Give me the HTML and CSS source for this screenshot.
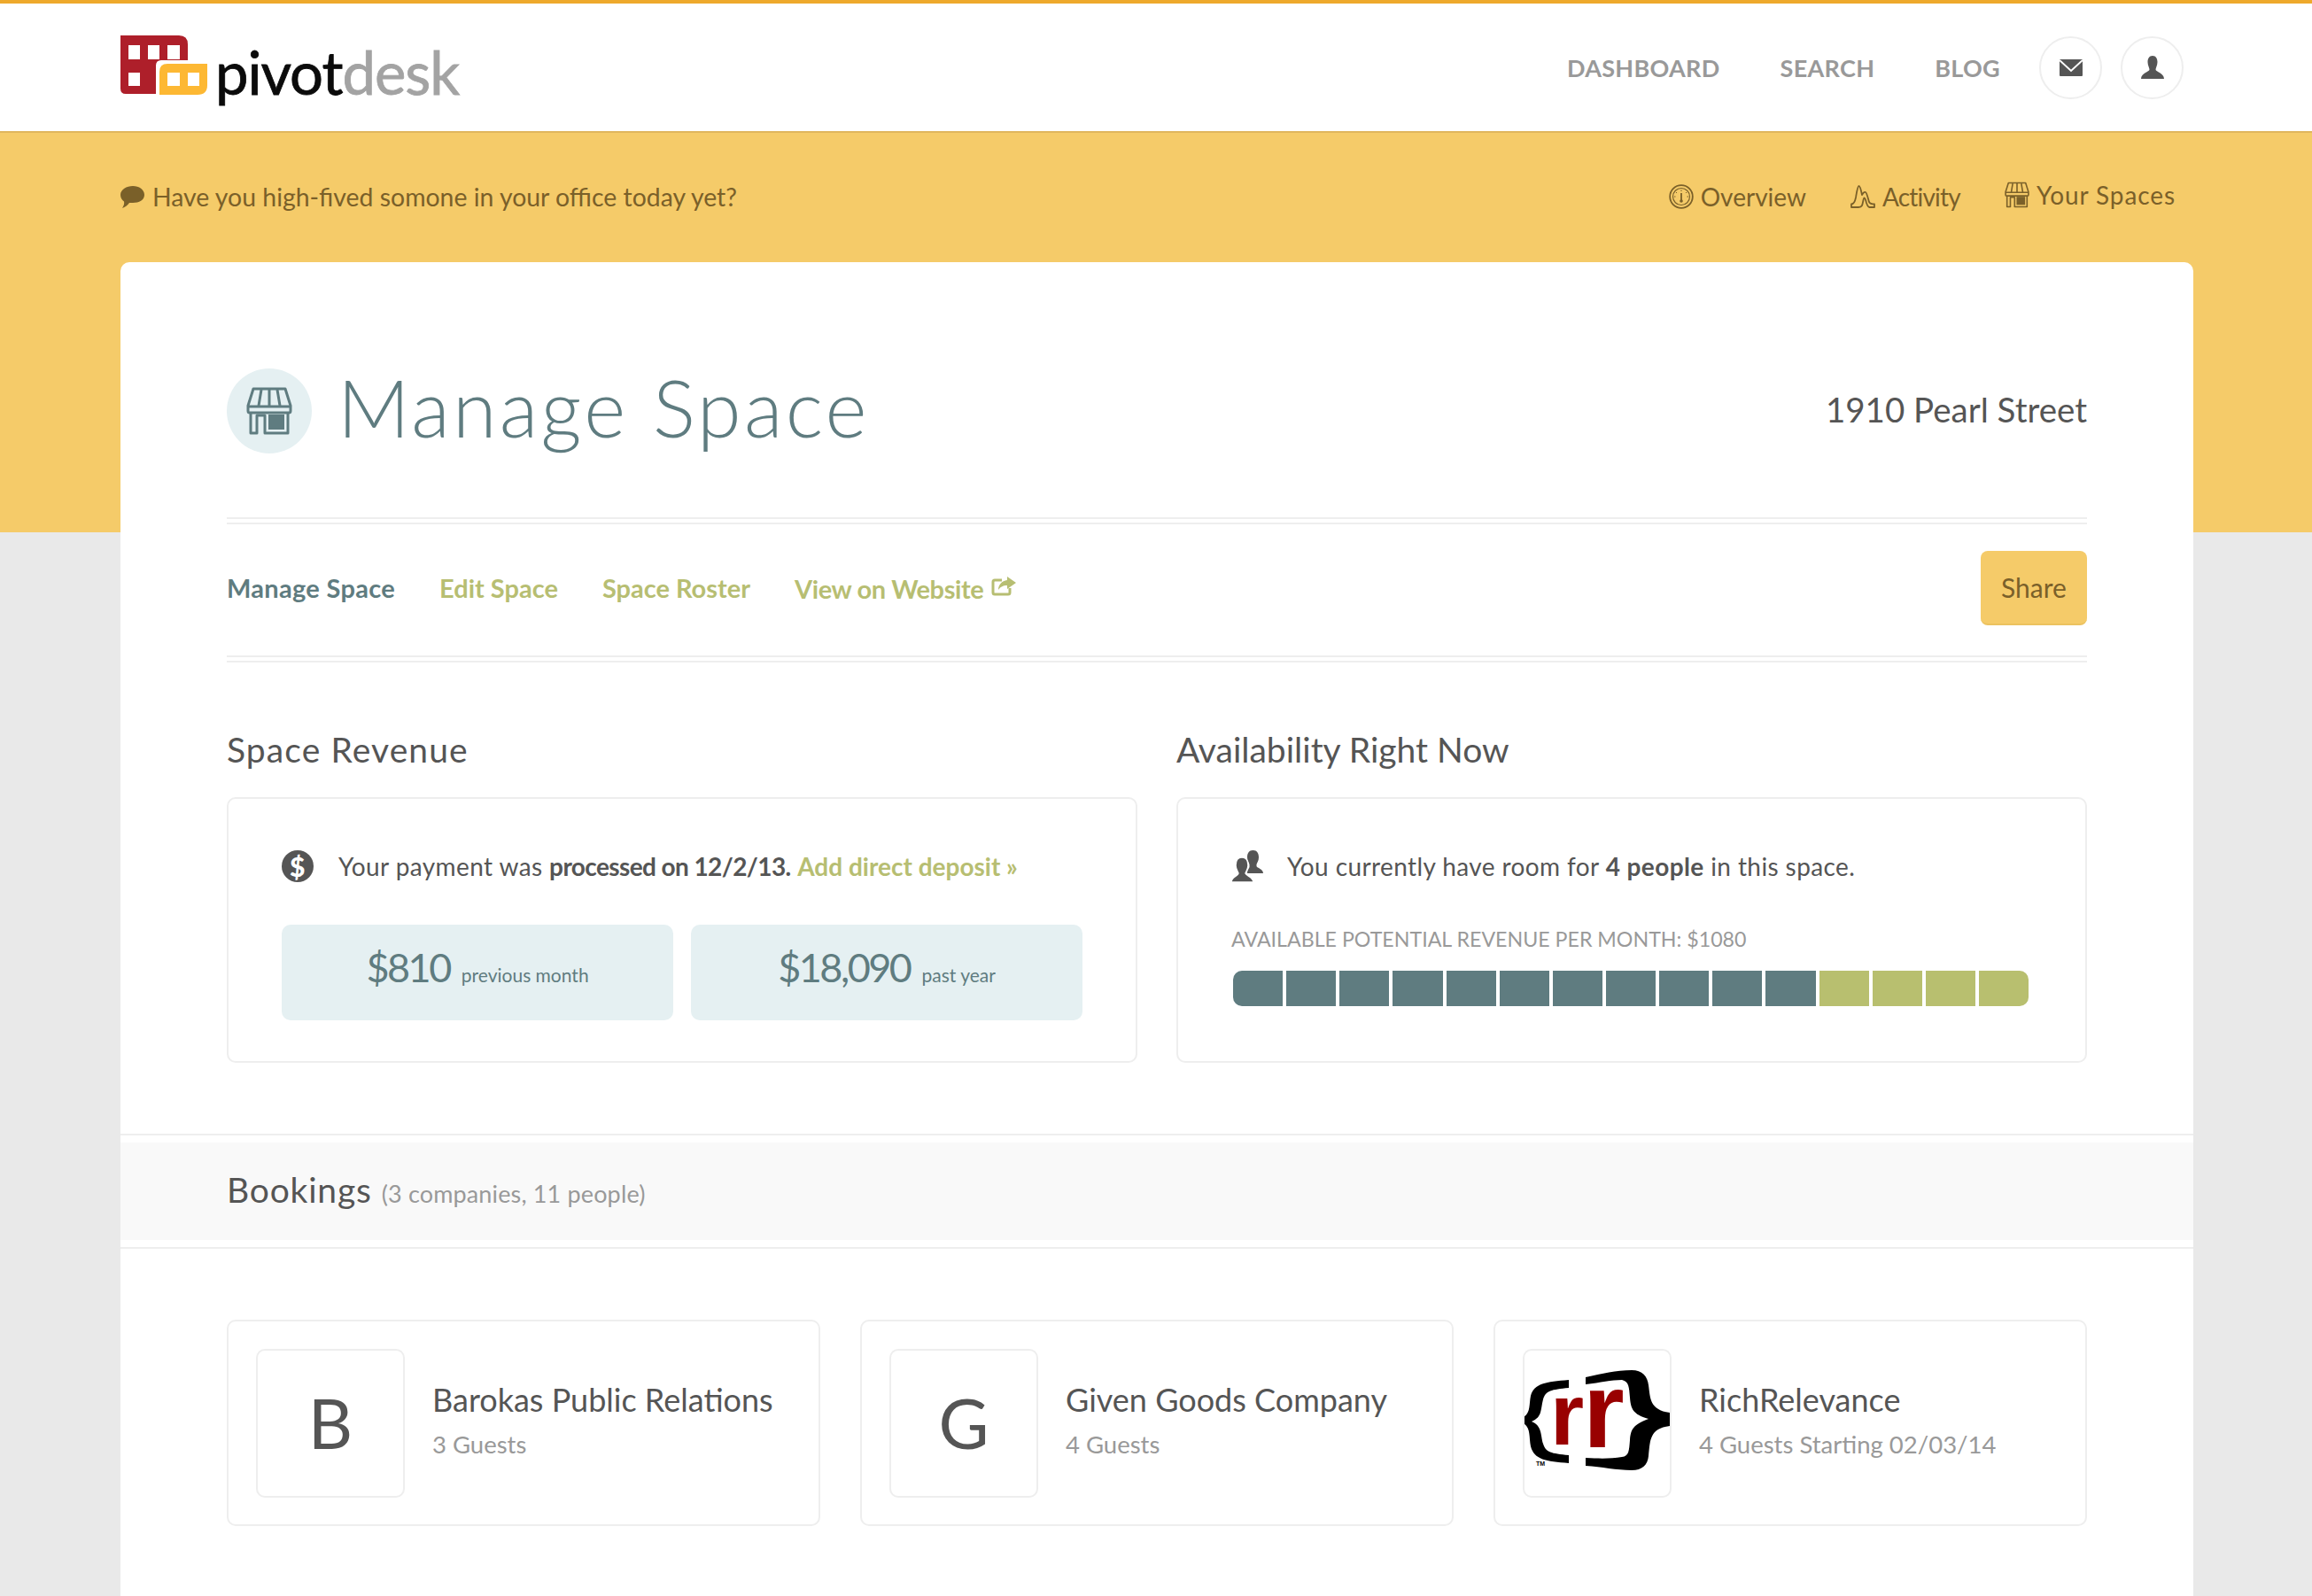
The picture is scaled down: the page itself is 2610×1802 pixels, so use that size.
FILE: index.html
```html
<!DOCTYPE html>
<html lang="en">
<head>
    <meta charset="UTF-8">
    <meta name="viewport" content="width=device-width, initial-scale=1.0">
    <title>PivotDesk - Manage Space</title>
    <link rel="stylesheet" href="styles.css">
</head>
<body>
    <svg class="defs" width="0" height="0">
        <symbol id="store" viewBox="0 0 52 54">
            <g fill="none" stroke="currentColor" stroke-width="3" stroke-linejoin="round">
                <path d="M8 2H44L50 21V27Q50 29 48 29H4Q2 29 2 27V21Z"/>
                <path d="M2 22H50M17 3L14 21M26 3V21M35 3L38 21"/>
                <path d="M5 29V52H12V32H21V52H47V29"/>
            </g>
            <rect x="25" y="31" width="18" height="17" fill="currentColor"/>
        </symbol>
        <symbol id="person" viewBox="0 0 26 26">
            <path d="M13 0C9 0 7.500 3.500 7.500 7C7.500 11 9.500 13.500 9.500 15.500C9.500 18 0 19.500 0 26H26C26 19.500 16.500 18 16.500 15.500C16.500 13.500 18.500 11 18.500 7C18.500 3.500 17 0 13 0Z" fill="currentColor"/>
        </symbol>
    </svg>

    <header class="topbar">
        <a class="logo" href="#">
            <svg class="logo-mark" viewBox="0 0 98 67" width="98" height="67">
                <path d="M0 0H66Q76 0 76 10V28H46Q40 28 40 34V66H6Q0 66 0 60Z" fill="#ae1f2a"/>
                <path d="M9 11h13v16H9zM31 11h13v16H31zM53 11h14v16H53zM9 42h13v15H9z" fill="#fff"/>
                <path d="M53 32H98V56Q98 67 87 67H44V41Q44 32 53 32Z" fill="#fdb833"/>
                <path d="M53 42h14v15H53zM76 42h13v15H76z" fill="#fff"/>
            </svg>
            <span class="wordmark">pivot<span class="wordmark-grey">desk</span></span>
        </a>
        <nav class="mainnav">
            <a href="#">Dashboard</a>
            <a href="#">Search</a>
            <a href="#">Blog</a>
            <a class="round-btn" href="#">
                <svg viewBox="0 0 26 19" width="26" height="19">
                    <rect width="26" height="19" rx="1" fill="#555"/>
                    <path d="M0 1L13 13L26 1" fill="none" stroke="#fff" stroke-width="2"/>
                </svg>
            </a>
            <a class="round-btn" href="#">
                <svg class="dark-icon" width="26" height="26"><use href="#person"/></svg>
            </a>
        </nav>
    </header>

    <div class="band">
        <div class="tipbar">
            <p class="tip">
                <svg viewBox="0 0 27 25" width="27" height="25">
                    <path d="M14 0C21 0 27 4 27 10C27 16 21 19 14 19C12 19 11 19 10 19C8 22 5 24 2 25C4 22 4.500 19.500 4 17.500C1.500 16 0 13 0 10C0 4 7 0 14 0Z" fill="currentColor"/>
                </svg>
                Have you high-fived somone in your office today yet?
            </p>
            <nav class="subnav">
                <a href="#">
                    <svg viewBox="0 0 28 28" width="28" height="28">
                        <g fill="none" stroke="currentColor">
                            <circle cx="14" cy="14" r="12.800" stroke-width="1.800"/>
                            <circle cx="14" cy="14" r="9.500" stroke-width="1.200"/>
                            <path d="M14 6.500v1.500M8 9l1 1M20 9l-1 1M6 14h1.500M22 14h-1.500" stroke-width="1"/>
                            <path d="M14 10V19" stroke-width="1.800"/>
                        </g>
                        <circle cx="14" cy="19" r="1.800" fill="currentColor"/>
                    </svg>
                    Overview
                </a>
                <a class="subnav-activity" href="#">
                    <svg viewBox="0 0 28 28" width="28" height="28">
                        <path d="M1 26V22.500C4 22.500 5 20 6 15C7 9 8 2 9.500 2C11 2 12 7 13 12C14 10 15.500 8.500 17 9C18.500 9.500 20 17 21 20C22 22 24 22.500 27 22.500V26H21.500C20 26 19 24 18 21C17.500 19 16.500 15.500 15.500 15.500C14.500 15.500 14 22 13 24C12 26 11 26 9 26Z" fill="none" stroke="currentColor" stroke-width="1.800" stroke-linejoin="round"/>
                    </svg>
                    Activity
                </a>
                <a class="subnav-spaces" href="#">
                    <svg width="28" height="30"><use href="#store"/></svg>
                    Your Spaces
                </a>
            </nav>
        </div>
    </div>

    <main class="card">
        <div class="title-row">
            <div class="title-left">
                <span class="title-icon"><svg width="52" height="54"><use href="#store"/></svg></span>
                <h1>Manage Space</h1>
            </div>
            <div class="address">1910 Pearl Street</div>
        </div>

        <div class="rule"></div>
        <div class="tabs">
            <nav class="tab-links">
                <a class="active" href="#">Manage Space</a>
                <a href="#">Edit Space</a>
                <a href="#">Space Roster</a>
                <a class="tab-external" href="#">View on Website
                    <svg viewBox="0 0 28 22" width="28" height="22">
                        <path d="M12 4H4Q2 4 2 6V18Q2 20 4 20H19Q21 20 21 18V13" fill="none" stroke="currentColor" stroke-width="3"/>
                        <path d="M18 0L28 7L18 14V10C13 10 10 12 8 15C8 9 12 5 18 4Z" fill="currentColor"/>
                    </svg>
                </a>
            </nav>
            <button class="share" type="button">Share</button>
        </div>
        <div class="rule"></div>

        <div class="columns">
            <section>
                <h2 class="revenue-title">Space Revenue</h2>
                <div class="panel">
                    <p class="message payment">
                        <span class="dollar">$</span>
                        <span>Your payment was <b>processed on 12/2/13.</b> <a href="#">Add direct deposit »</a></span>
                    </p>
                    <div class="stats">
                        <div class="stat"><strong>$810</strong> <small>previous month</small></div>
                        <div class="stat"><strong>$18,090</strong> <small>past year</small></div>
                    </div>
                </div>
            </section>
            <section>
                <h2>Availability Right Now</h2>
                <div class="panel">
                    <p class="message">
                        <svg class="dark-icon" viewBox="0 0 36 36" width="36" height="36">
                            <path d="M24.500 0C20 0 18 3.500 18 8C18 12 20 14 20.500 16V18C21 20 18 22 18 26H36C36 21 29 20 28.500 18V16C29 14 31 12 31 8C31 3.500 29 0 24.500 0Z" fill="currentColor"/>
                            <path d="M12 8C7 8 5 12 5 17C5 21 7 23 8 26C8 29 0 30 0 36H25C25 30 17 29 16 26C17 23 19 21 19 17C19 12 17 8 12 8Z" fill="currentColor" stroke="#fff" stroke-width="1.500"/>
                        </svg>
                        <span>You currently have room for <b>4 people</b> in this space.</span>
                    </p>
                    <div class="bar-label">AVAILABLE POTENTIAL REVENUE PER MONTH: $1080</div>
                    <div class="seats">
                        <i></i><i></i><i></i><i></i><i></i><i></i><i></i><i></i><i></i><i></i><i></i>
                        <i class="free"></i><i class="free"></i><i class="free"></i><i class="free"></i>
                    </div>
                </div>
            </section>
        </div>

        <div class="bookings-head">
            <div class="bookings-bar">
                <h2>Bookings</h2>
                <span>(3 companies, 11 people)</span>
            </div>
        </div>

        <div class="bookings">
            <div class="company">
                <div class="company-logo">B</div>
                <div class="company-text">
                    <div class="company-name">Barokas Public Relations</div>
                    <div class="company-sub">3 Guests</div>
                </div>
            </div>
            <div class="company">
                <div class="company-logo">G</div>
                <div class="company-text">
                    <div class="company-name">Given Goods Company</div>
                    <div class="company-sub">4 Guests</div>
                </div>
            </div>
            <div class="company">
                <div class="company-logo">
                    <svg viewBox="0 0 168 168" width="168" height="168">
                        <path d="M52 36V45C32 47 26 48 23 58C20 70 22 78 10 83C22 88 20 98 23 108C26 118 32 119 52 121V130C26 128 13 126 9 111C7 100 9 90 1 85V78C9 73 7 64 9 54C13 40 26 38 52 36Z" fill="#000"/>
                        <path d="M71 33C90 29 105 25 123 25C135 25 141 32 142 42C144 56 143 70 166 73V88C143 91 144 104 142 122C141 132 135 138 123 138C105 138 90 134 71 133V124C88 125 100 125 112 123C120 122 120 116 121 104C122 92 124 87 142 80C124 75 122 68 121 56C120 44 120 38 112 36C100 36 88 39 71 41Z" fill="#000"/>
                        <text class="rr" x="31" y="109" font-size="98">r</text>
                        <text class="rr" x="68" y="112" font-size="120">r</text>
                        <text class="tm" x="15" y="133" font-size="7">TM</text>
                    </svg>
                </div>
                <div class="company-text">
                    <div class="company-name">RichRelevance</div>
                    <div class="company-sub">4 Guests Starting 02/03/14</div>
                </div>
            </div>
        </div>
    </main>
</body>
</html>
```

FILE: styles.css
```css
* {
    box-sizing: border-box;
}
html, body {
    margin: 0;
    padding: 0;
}
body {
    display: flex;
    flex-direction: column;
    min-height: 100vh;
    background: #e9e9e9;
    color: #555;
    font-family: Lato, "Open Sans", sans-serif;
    font-size: 28px;
}
a {
    color: inherit;
    text-decoration: none;
}
h1, h2, p {
    margin: 0;
    font-weight: normal;
}
.defs {
    display: block;
    height: 0;
}

/* top bar */
.topbar {
    display: flex;
    flex-shrink: 0;
    align-items: center;
    justify-content: space-between;
    height: 150px;
    padding: 0 145px 0 136px;
    background: #fff;
    border-top: 4px solid #eea92c;
    border-bottom: 2px solid #e0b65e;
}
.logo {
    display: flex;
    align-items: flex-start;
    height: 80px;
    margin-top: 8px;
}
.wordmark {
    margin: 1px 0 0 9px;
    color: #0b0b0b;
    font-size: 67px;
    line-height: 80px;
    letter-spacing: -1.050px;
    -webkit-text-stroke: 0.800px currentColor;
}
.wordmark-grey {
    color: #a3a3a3;
}
.mainnav {
    display: flex;
    align-items: center;
    color: #999;
    font-size: 27px;
    font-weight: 700;
    letter-spacing: 0.300px;
    text-transform: uppercase;
}
.mainnav a {
    margin-right: 68px;
}
.mainnav a.round-btn {
    display: flex;
    align-items: center;
    justify-content: center;
    width: 71px;
    height: 71px;
    margin: 0 0 0 21px;
    border: 2px solid #eee;
    border-radius: 50%;
}
.mainnav a:nth-child(3) {
    margin-right: 23px;
}
.dark-icon {
    color: #555;
}

/* yellow band */
.band {
    flex-shrink: 0;
    height: 451px;
    background: #f5cb69;
    color: #7a6029;
}
.tipbar {
    display: flex;
    align-items: center;
    justify-content: space-between;
    height: 144px;
    padding: 0 154px 0 136px;
}
.tip {
    display: flex;
    align-items: center;
    gap: 9px;
    font-size: 28.400px;
}
.subnav {
    display: flex;
    align-items: center;
    gap: 50px;
}
.subnav a {
    display: flex;
    align-items: center;
    gap: 8px;
}
.subnav .subnav-activity {
    letter-spacing: -0.800px;
}
.subnav .subnav-spaces {
    margin-top: -4px;
    letter-spacing: 0.900px;
}

/* main card */
.card {
    flex: 1;
    width: 2340px;
    margin: -305px 0 0 136px;
    padding-top: 120px;
    background: #fff;
    border-radius: 10px 10px 0 0;
}
.title-row {
    display: flex;
    align-items: center;
    justify-content: space-between;
    margin: 0 120px 72px;
}
.title-left {
    display: flex;
    align-items: center;
    gap: 29px;
}
.title-icon {
    display: flex;
    align-items: center;
    justify-content: center;
    width: 96px;
    height: 96px;
    background: #e5f0f2;
    border-radius: 50%;
    color: #5f7c80;
}
h1 {
    margin-top: -10px;
    color: #5f7c80;
    font-size: 90px;
    font-weight: 300;
    line-height: 96px;
    letter-spacing: 3.200px;
}
.address {
    margin-top: -5px;
    font-size: 38.500px;
}
.rule {
    height: 8px;
    margin: 0 120px;
    border-top: 2px solid #eee;
    border-bottom: 2px solid #eee;
}
.tabs {
    display: flex;
    align-items: flex-start;
    justify-content: space-between;
    height: 148px;
    margin: 0 120px;
    padding-top: 30px;
}
.tab-links {
    display: flex;
    align-items: center;
    gap: 50px;
    height: 82px;
    color: #b7be72;
    font-size: 29px;
    font-weight: 700;
}
.tab-links .active {
    color: #5f7c80;
    letter-spacing: 0.300px;
}
.tab-external {
    display: flex;
    align-items: center;
    gap: 9px;
    margin-top: 3px;
    letter-spacing: -0.400px;
}
.tab-external svg {
    margin-top: -6px;
}
.share {
    width: 120px;
    height: 84px;
    padding: 0;
    background: #f5cb69;
    border: none;
    border-bottom: 2px solid #ecc25f;
    border-radius: 8px;
    color: #7a6029;
    font: inherit;
    font-size: 30px;
}

/* revenue and availability */
.columns {
    display: grid;
    grid-template-columns: 1028px 1028px;
    gap: 44px;
    margin: 74px 120px 80px;
}
h2 {
    font-size: 39px;
    line-height: 48px;
}
.revenue-title {
    letter-spacing: 1.100px;
}
.panel {
    height: 300px;
    margin-top: 30px;
    padding: 58px 60px 0;
    border: 2px solid #eee;
    border-radius: 10px;
}
.message {
    display: flex;
    align-items: center;
    gap: 27px;
    height: 36px;
    letter-spacing: 0.400px;
}
.message b {
    font-weight: 700;
}
.payment {
    gap: 28px;
}
.payment b {
    letter-spacing: -0.600px;
}
.message a {
    color: #b7be72;
    font-weight: 700;
    letter-spacing: 0;
}
.dollar {
    display: flex;
    align-items: center;
    justify-content: center;
    width: 36px;
    height: 36px;
    background: #555;
    border-radius: 50%;
    color: #fff;
    font-size: 30px;
    font-weight: 900;
}
.stats {
    display: grid;
    grid-template-columns: 1fr 1fr;
    gap: 20px;
    margin-top: 48px;
}
.stat {
    display: flex;
    align-items: baseline;
    justify-content: center;
    gap: 13px;
    height: 108px;
    padding-top: 21px;
    background: #e5f0f2;
    border-radius: 10px;
    color: #5f7c80;
}
.stat strong {
    font-size: 45px;
    font-weight: 400;
    letter-spacing: -2.500px;
}
.stat small {
    font-size: 21px;
}
.bar-label {
    margin-top: 50px;
    color: #999;
    font-size: 23.200px;
    line-height: 28px;
}
.seats {
    display: flex;
    gap: 4px;
    width: 898px;
    height: 40px;
    margin: 22px 0 0 2px;
}
.seats i {
    flex: 1;
    background: #5f7c80;
}
.seats i:first-child {
    border-radius: 10px 0 0 10px;
}
.seats i.free {
    background: #b8bf6f;
}
.seats i:last-child {
    border-radius: 0 10px 10px 0;
}

/* bookings */
.bookings-head {
    padding: 8px 0;
    border-top: 2px solid #eee;
    border-bottom: 2px solid #eee;
}
.bookings-bar {
    display: flex;
    align-items: baseline;
    gap: 11px;
    height: 110px;
    padding: 29px 0 0 120px;
    background: #f9f9f9;
}
.bookings-bar h2 {
    letter-spacing: 0.800px;
}
.bookings-bar span {
    color: #999;
    font-size: 27px;
    letter-spacing: 0.150px;
}
.bookings {
    display: grid;
    grid-template-columns: repeat(3, 1fr);
    gap: 45px;
    margin: 80px 120px 0;
}
.company {
    display: flex;
    align-items: center;
    gap: 31px;
    height: 233px;
    padding: 0 31px;
    border: 2px solid #eee;
    border-radius: 10px;
}
.company-logo {
    display: flex;
    flex-shrink: 0;
    align-items: center;
    justify-content: center;
    width: 168px;
    height: 168px;
    padding-bottom: 2px;
    overflow: hidden;
    border: 2px solid #eee;
    border-radius: 10px;
    font-size: 78px;
    font-weight: 400;
}
.company-logo svg {
    flex-shrink: 0;
}
.rr {
    fill: #990000;
    font-family: "Liberation Sans", sans-serif;
    font-weight: 700;
}
.tm {
    fill: #000;
    font-family: "Liberation Sans", sans-serif;
    font-weight: 700;
}
.company-text {
    margin-top: -6px;
}
.company-name {
    font-size: 36px;
    line-height: 44px;
}
.company-sub {
    margin-top: 11px;
    color: #999;
    font-size: 27.500px;
    line-height: 36px;
}
```
